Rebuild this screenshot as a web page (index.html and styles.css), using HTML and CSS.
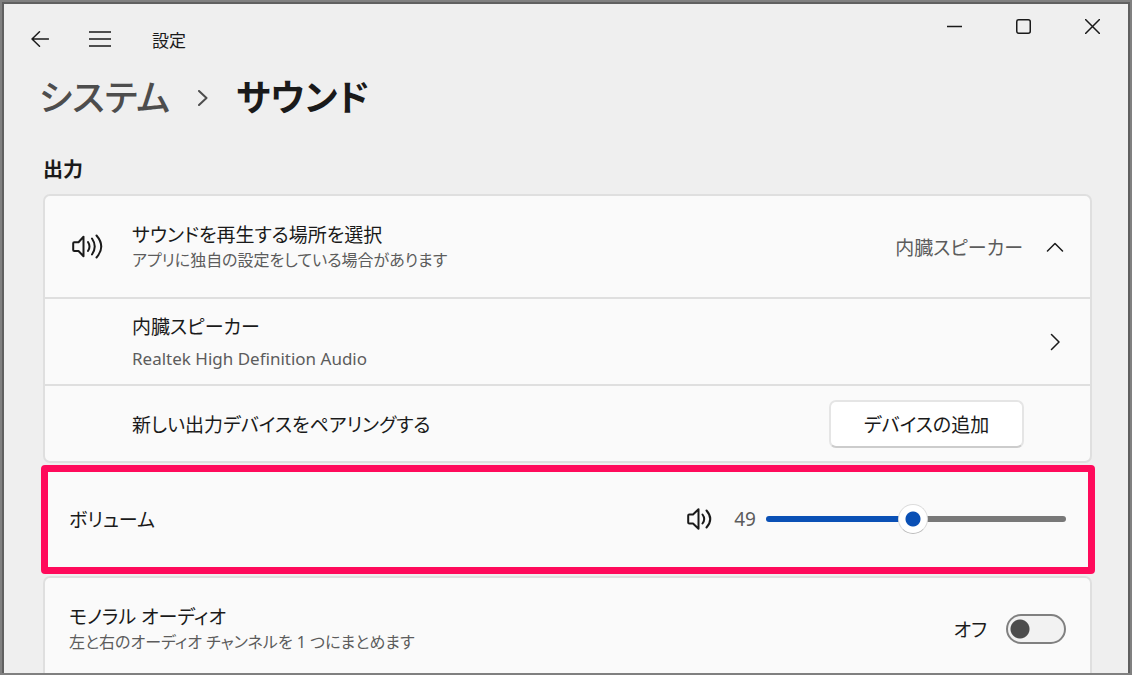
FILE: index.html
```html
<!DOCTYPE html>
<html lang="ja">
<head>
    <meta charset="UTF-8">
    <meta name="viewport" content="width=device-width, initial-scale=1.0">
    <title>設定</title>
    <link rel="stylesheet" href="styles.css">
</head>
<body>
    <div class="window">
        <header class="titlebar">
            <div class="nav">
                <button class="nav-btn" aria-label="戻る">
                    <svg width="18" height="16" viewBox="0 0 18 16"><path d="M17.5 8H1M8.5 .8L1 8l7.5 7.2"/></svg>
                </button>
                <button class="nav-btn" aria-label="メニュー">
                    <svg width="22" height="16" viewBox="0 0 22 16"><path d="M0 1h22M0 8h22M0 15h22"/></svg>
                </button>
                <span class="app-name">設定</span>
            </div>
            <div class="controls">
                <button class="control-btn" aria-label="最小化">
                    <svg width="15" height="15" viewBox="0 0 15 15"><path d="M0 7.5h15"/></svg>
                </button>
                <button class="control-btn" aria-label="最大化">
                    <svg width="15" height="15" viewBox="0 0 15 15"><rect x=".75" y=".75" width="13.5" height="13.5" rx="2"/></svg>
                </button>
                <button class="control-btn" aria-label="閉じる">
                    <svg width="15" height="15" viewBox="0 0 15 15"><path d="M.5.5l14 14M14.5.5l-14 14"/></svg>
                </button>
            </div>
        </header>

        <main class="content">
            <h1 class="breadcrumb">
                <a href="#">システム</a>
                <svg width="10" height="16" viewBox="0 0 10 16"><path d="M1 1l7.5 7L1 15"/></svg>
                <span>サウンド</span>
            </h1>

            <h2>出力</h2>

            <section class="card">
                <div class="row">
                    <svg class="row-icon" width="32" height="26" viewBox="0 0 32 26"><path d="M2.2 9.2q0-1 1-1H7.5L12.5 2.8V22.2L7.5 17H3.2q-1 0-1-1z"/><path d="M17 8q3 4.500 0 9M21 4.500q5.500 8 0 16M25.500 1.500q9.500 11 0 22"/></svg>
                    <div class="text">
                        <p class="label">サウンドを再生する場所を選択</p>
                        <p class="desc">アプリに独自の設定をしている場合があります</p>
                    </div>
                    <span class="value">内臓スピーカー</span>
                    <button class="chevron" aria-label="折りたたむ">
                        <svg width="18" height="10" viewBox="0 0 18 10"><path d="M1.500 9L9 1.500 16.500 9"/></svg>
                    </button>
                </div>
                <div class="row device">
                    <div class="text">
                        <p class="label">内臓スピーカー</p>
                        <p class="desc model">Realtek High Definition Audio</p>
                    </div>
                    <button class="chevron" aria-label="詳細">
                        <svg width="10" height="18" viewBox="0 0 10 18"><path d="M1.500 1.500L9 9l-7.500 7.500"/></svg>
                    </button>
                </div>
                <div class="row pair">
                    <p class="label text">新しい出力デバイスをペアリングする</p>
                    <button class="add-btn">デバイスの追加</button>
                </div>
            </section>

            <section class="card highlight">
                <div class="row volume">
                    <label class="label text" for="volume">ボリューム</label>
                    <svg width="26" height="22" viewBox="0 0 26 22"><path d="M2.200 7.500q0-1 1-1H7L12.500 1.200V20.800L7 15.500H3.200q-1 0-1-1z"/><path d="M16.500 6.500q3.400 4.500 0 9M20.500 2.500q7.500 8.500 0 17"/></svg>
                    <output class="level" for="volume">49</output>
                    <input type="range" id="volume" class="slider" min="0" max="100" value="49">
                </div>
            </section>

            <section class="card">
                <div class="row mono">
                    <label class="text" for="mono">
                        <span class="label">モノラル オーディオ</span>
                        <span class="desc">左と右のオーディオ チャンネルを 1 つにまとめます</span>
                    </label>
                    <span class="state">オフ</span>
                    <input type="checkbox" id="mono" class="toggle">
                </div>
            </section>
        </main>
    </div>
</body>
</html>
```
FILE: styles.css
```css
* { box-sizing: border-box; }

body {
    margin: 0;
    height: 100vh;
    border: 2px solid #808080;
    background-color: #efefef;
    color: #1a1a1a;
    font-family: "Noto Sans", "Noto Sans CJK JP", sans-serif;
    font-size: 19px;
    font-feature-settings: "palt";
    overflow: hidden;
}

.window {
    height: 100%;
    border: 2px solid #606060;
    border-bottom: none;
    overflow: hidden;
}

h1, h2, p { margin: 0; }

svg {
    display: block;
    flex: none;
    fill: none;
    stroke: #1a1a1a;
    stroke-width: 2;
    stroke-linecap: round;
    stroke-linejoin: round;
}

button {
    padding: 0;
    border: none;
    background: none;
    color: inherit;
    font: inherit;
    font-feature-settings: inherit;
}

/* Title bar */
.titlebar {
    display: flex;
    justify-content: space-between;
    align-items: flex-start;
}

.nav {
    display: flex;
    align-items: center;
    height: 70px;
    padding-left: 6px;
}

.nav-btn, .control-btn {
    display: flex;
    align-items: center;
    justify-content: center;
}

.nav-btn { width: 60px; height: 44px; }
.nav-btn svg { stroke-width: 1.5; }
.app-name { margin-left: 22px; font-size: 17px; }

.controls { display: flex; padding-right: 1px; }
.control-btn { width: 69px; height: 45px; }
.control-btn svg { stroke-width: 1.5; }

/* Page */
.content { padding: 0 36px 0 39px; }

.breadcrumb {
    display: flex;
    align-items: center;
    gap: 28px;
    height: 48px;
    margin-left: -4px;
    font-size: 36px;
    font-weight: 600;
    line-height: 48px;
}

.breadcrumb a { color: #4d4d4d; text-decoration: none; font-weight: 500; }
.breadcrumb svg { stroke: #4d4d4d; }

h2 {
    margin-top: 33px;
    margin-bottom: 9px;
    font-size: 20px;
    font-weight: 600;
    line-height: 30px;
}

.card {
    border: 2px solid #dfdfdf;
    border-radius: 7px;
    background-color: #fafafa;
}

.row {
    display: flex;
    align-items: center;
    min-height: 101px;
    padding-right: 23px;
}

.row + .row { border-top: 2px solid #dfdfdf; }
.row-icon { margin-left: 26px; margin-right: 29px; }
.text { flex: 1; padding-top: 3px; }
.label { display: block; line-height: 25px; }
.desc { display: block; color: #5c5c5c; font-size: 16px; line-height: 25px; }
.value { color: #5c5c5c; }

.chevron {
    display: flex;
    justify-content: center;
    width: 24px;
    margin-left: 20px;
}

.chevron svg { stroke-width: 1.5; }

.device { min-height: 87px; padding-left: 87px; }
.device .label, .device .desc { line-height: 31px; }
.model { font-size: 17px; }

.pair { min-height: 77px; padding-left: 87px; padding-right: 66px; }

.add-btn {
    width: 195px;
    height: 48px;
    border: 2px solid #e5e5e5;
    border-bottom-color: #cccccc;
    border-radius: 7px;
    background-color: #ffffff;
}

.highlight {
    margin: 2px -3px 2px -2px;
    border: 7px solid #ff0a5b;
    border-radius: 4px;
}

/* Volume */
.volume {
    min-height: 95px;
    padding-left: 21px;
    padding-right: 22px;
    padding-bottom: 2px;
}

.level { margin-left: 22px; margin-right: 10px; color: #5c5c5c; }

.slider {
    -webkit-appearance: none;
    appearance: none;
    width: 300px;
    height: 32px;
    margin: 0;
    background: none;
}

.slider::-webkit-slider-runnable-track {
    height: 6px;
    border-radius: 3px;
    background: linear-gradient(to right, #0a50b5 49%, #787878 49%);
}

.slider::-webkit-slider-thumb {
    -webkit-appearance: none;
    width: 30px;
    height: 30px;
    margin-top: -12px;
    border: 1px solid #dcdcdc;
    border-bottom-color: #bbbbbb;
    border-radius: 50%;
    background: radial-gradient(circle, #0a50b5 7px, #ffffff 8px);
}

/* Mono audio */
.mono { padding-left: 24px; padding-right: 24px; }
.state { margin-right: 19px; }

.toggle {
    -webkit-appearance: none;
    appearance: none;
    width: 60px;
    height: 30px;
    margin: 0;
    border: 2px solid #808080;
    border-radius: 15px;
    background: radial-gradient(circle at 12px 50%, #4d4d4d 9px, #f2f2f2 10px);
}

.toggle:checked {
    border-color: #0a50b5;
    background: radial-gradient(circle at 44px 50%, #ffffff 9px, #0a50b5 10px);
}
```
